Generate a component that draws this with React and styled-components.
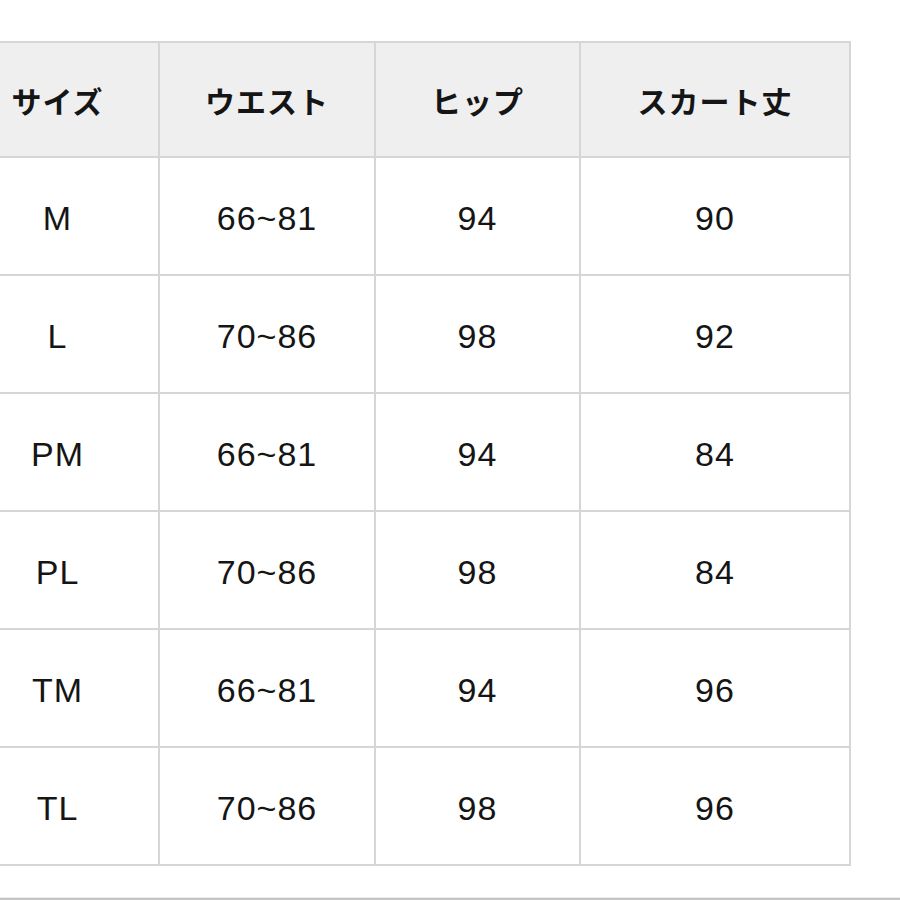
import React from 'react';
import styled, { createGlobalStyle } from 'styled-components';

const GlobalStyle = createGlobalStyle`
    html, body {
        margin: 0;
        padding: 0;
        background: #fff;
        overflow: hidden;
    }
`;

const Page = styled.div`
    width: 900px;
    height: 900px;
    padding-top: 41px;
    box-sizing: border-box;
    overflow: hidden;
`;

const SizeTable = styled.table`
    margin-left: -45px;
    border-collapse: collapse;
    table-layout: fixed;
    color: #151515;
`;

const HeadCell = styled.th`
    width: ${({ $width }) => $width}px;
    height: 113px;
    padding: 0;
    border: 2px solid #d6d6d6;
    background: #efefef;
    font-family: "Noto Sans CJK JP", "Noto Sans", sans-serif;
    font-size: 30px;
    font-weight: 700;
    letter-spacing: 1px;
    text-align: center;
    vertical-align: middle;
`;

const Cell = styled.td`
    height: 113px;
    padding: 3px 0 0;
    border: 2px solid #d6d6d6;
    font-family: "Liberation Sans", Arial, sans-serif;
    font-size: 34px;
    line-height: 1;
    letter-spacing: 1px;
    text-align: center;
    vertical-align: middle;
`;

const Divider = styled.div`
    margin-top: 31px;
    height: 3px;
    background: #c4c4c4;
    border-top: 1px solid #ececec;
`;

const columns = [
    { label: 'サイズ', width: 201 },
    { label: 'ウエスト', width: 214 },
    { label: 'ヒップ', width: 203 },
    { label: 'スカート丈', width: 268 },
];

const rows = [
    ['M', '66~81', '94', '90'],
    ['L', '70~86', '98', '92'],
    ['PM', '66~81', '94', '84'],
    ['PL', '70~86', '98', '84'],
    ['TM', '66~81', '94', '96'],
    ['TL', '70~86', '98', '96'],
];

const App = () => {
    return (
        <>
            <GlobalStyle />
            <Page>
                <SizeTable>
                    <thead>
                        <tr>
                            {columns.map((col) => (
                                <HeadCell key={col.label} $width={col.width}>
                                    {col.label}
                                </HeadCell>
                            ))}
                        </tr>
                    </thead>
                    <tbody>
                        {rows.map((row) => (
                            <tr key={row[0]}>
                                {row.map((value, i) => (
                                    <Cell key={i}>{value}</Cell>
                                ))}
                            </tr>
                        ))}
                    </tbody>
                </SizeTable>
                <Divider />
            </Page>
        </>
    );
};

export default App;
